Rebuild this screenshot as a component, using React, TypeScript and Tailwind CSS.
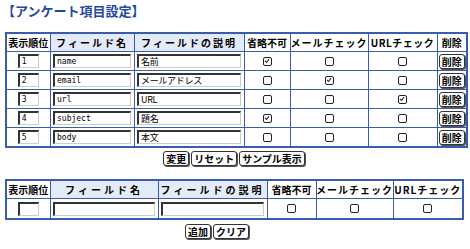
import React from "react";

const F = '"Noto Sans CJK JP", "Noto Sans", sans-serif';

function Check({ on }: { on?: boolean }) {
  return (
    <span className="block w-[9px] h-[9px] border border-[#222] rounded-[2px] bg-white relative">
      {on && (
        <svg viewBox="0 0 9 9" className="absolute left-0 top-0 w-[7px] h-[7px]">
          <path d="M1.2 3.8 L3.2 5.8 L6.5 1.5" stroke="#222" strokeWidth="1.3" fill="none" />
        </svg>
      )}
    </span>
  );
}

function Inp({ w, v, mono }: { w: number; v?: string; mono?: boolean }) {
  return (
    <div
      className={
        "block h-[14px] bg-white border-t-2 border-l-2 border-t-[#333] border-l-[#333] border-r border-b border-r-[#ccc] border-b-[#ccc] pl-[2px] text-left text-black overflow-hidden whitespace-nowrap " +
        (mono ? "text-[8px] leading-[11px]" : "text-[9px] leading-[11px] tracking-[-0.3px]")
      }
      style={{ width: w, fontFamily: mono ? '"DejaVu Sans Mono", monospace' : F }}
    >
      {v}
    </div>
  );
}

function Btn({ children }: { children: React.ReactNode }) {
  return (
    <span className="inline-block h-[15px] px-[2px] border border-[#333] rounded-[3px] bg-white text-[10px] leading-[13px] text-black font-bold shadow-[1px_1px_0_#555] whitespace-nowrap">
      {children}
    </span>
  );
}

const rows = [
  { n: "1", f: "name", d: "名前", c: [true, false, false] },
  { n: "2", f: "email", d: "メールアドレス", c: [false, true, false] },
  { n: "3", f: "url", d: "URL", c: [false, false, true] },
  { n: "4", f: "subject", d: "題名", c: [true, false, false] },
  { n: "5", f: "body", d: "本文", c: [false, false, false] },
];

const th = "border border-[#3a5cb0] p-0 text-[10px] leading-none font-bold text-black text-center whitespace-nowrap";
const td = "border border-[#3a5cb0] p-0 leading-none";

function C({ children, h = 18 }: { children: React.ReactNode; h?: number }) {
  return (
    <div className="flex items-center justify-center" style={{ height: h }}>
      {children}
    </div>
  );
}

export default function App() {
  return (
    <div className="w-[470px] h-[249px] bg-white relative overflow-hidden" style={{ fontFamily: F }}>
      <div className="pl-[2px] pt-[1px] h-[32px] text-[13px] leading-[20px] font-bold text-[#2449a0]">【アンケート項目設定】</div>
      <div className="pl-[5px]">
        <table className="border-collapse border-2 border-[#3a5cb0]" style={{ width: 461, tableLayout: "fixed" }}>
          <colgroup>
            <col style={{ width: 44 }} />
            <col style={{ width: 84 }} />
            <col style={{ width: 110 }} />
            <col style={{ width: 46 }} />
            <col style={{ width: 78 }} />
            <col style={{ width: 69 }} />
            <col style={{ width: 30 }} />
          </colgroup>
          <thead>
            <tr>
              <th className={th}><C h={17}>表示順位</C></th>
              <th className={th + " bg-[#e3eaf8] tracking-[2px]"}><C h={17}>フィールド名</C></th>
              <th className={th + " bg-[#e3eaf8] tracking-[2px]"}><C h={17}>フィールドの説明</C></th>
              <th className={th}><C h={17}>省略不可</C></th>
              <th className={th + " tracking-[1px]"}><C h={17}>メールチェック</C></th>
              <th className={th + " tracking-[0.5px]"}><C h={17}>URLチェック</C></th>
              <th className={th}><C h={17}>削除</C></th>
            </tr>
          </thead>
          <tbody>
            {rows.map((r) => (
              <tr key={r.n}>
                <td className={td}><C><Inp w={21} v={r.n} mono /></C></td>
                <td className={td}><C><Inp w={78} v={r.f} mono /></C></td>
                <td className={td}><C><Inp w={104} v={r.d} /></C></td>
                {r.c.map((c, i) => (
                  <td key={i} className={td}><C><Check on={c} /></C></td>
                ))}
                <td className={td}><C><Btn>削除</Btn></C></td>
              </tr>
            ))}
          </tbody>
        </table>
      </div>
      <div className="flex justify-center gap-[2px] mt-[3px] pr-[2px]">
        <Btn>変更</Btn>
        <Btn>リセット</Btn>
        <Btn>サンプル表示</Btn>
      </div>
      <div className="pl-[5px] mt-[13px]">
        <table className="border-collapse border-2 border-[#3a5cb0]" style={{ width: 457, tableLayout: "fixed" }}>
          <colgroup>
            <col style={{ width: 44 }} />
            <col style={{ width: 108 }} />
            <col style={{ width: 109 }} />
            <col style={{ width: 49 }} />
            <col style={{ width: 77 }} />
            <col style={{ width: 70 }} />
          </colgroup>
          <thead>
            <tr>
              <th className={th}><C h={17}>表示順位</C></th>
              <th className={th + " bg-[#e3eaf8] tracking-[3px]"}><C h={17}>フィールド名</C></th>
              <th className={th + " bg-[#e3eaf8] tracking-[3px]"}><C h={17}>フィールドの説明</C></th>
              <th className={th}><C h={17}>省略不可</C></th>
              <th className={th + " tracking-[1px]"}><C h={17}>メールチェック</C></th>
              <th className={th + " tracking-[1px]"}><C h={17}>URLチェック</C></th>
            </tr>
          </thead>
          <tbody>
            <tr>
              <td className={td}><C h={19}><Inp w={21} /></C></td>
              <td className={td}><C h={19}><Inp w={102} /></C></td>
              <td className={td}><C h={19}><Inp w={103} /></C></td>
              <td className={td}><C h={19}><Check /></C></td>
              <td className={td}><C h={19}><Check /></C></td>
              <td className={td}><C h={19}><Check /></C></td>
            </tr>
          </tbody>
        </table>
      </div>
      <div className="flex justify-center gap-[2px] mt-[4px] pr-[36px]">
        <Btn>追加</Btn>
        <Btn>クリア</Btn>
      </div>
    </div>
  );
}
